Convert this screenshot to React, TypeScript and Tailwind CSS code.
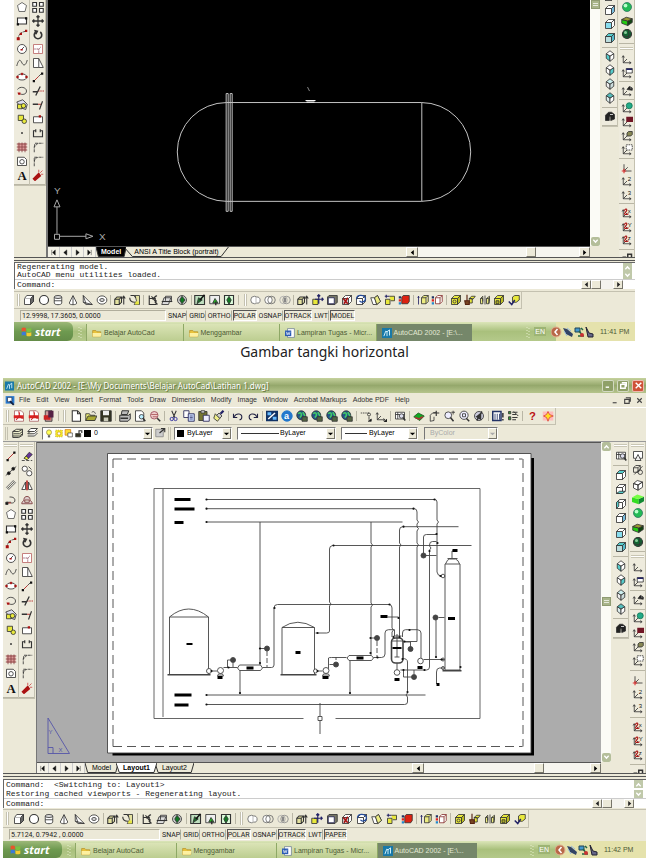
import React from 'react';

const cube = (face: string, top = '#fff', side = '#fff') => (
  <>
    <path d="M2 6h8v8H2z" fill={face} />
    <path d="M2 6l4-4h8l-4 4z" fill={top} />
    <path d="M10 6l4-4v8l-4 4z" fill={side} />
  </>
);

const iso = (left: string, right: string, top: string) => (
  <>
    <path d="M3 5l5 3v7l-5-4z" fill={left} />
    <path d="M13 5l-5 3v7l5-4z" fill={right} />
    <path d="M8 1l5 4-5 3-5-3z" fill={top} />
  </>
);

const ucs = (extra?: React.ReactNode) => (
  <>
    <path d="M3 4v9h10M3 13l5-5M1.5 6L3 3.5 4.5 6M11 11.5l2.5 1.5-2.5 1.5" />
    {extra}
  </>
);

const mark = (text: string) => (
  <text x="9" y="8" fontSize="8" fill="#111" stroke="none">{text}</text>
);

const red = '#a11';
const yellow = '#e8e83c';

const icons: Record<string, React.ReactNode> = {
  line: <><path d="M3 13L13 3" stroke={red} /><path d="M2 12h3v3H2zM11 2h3v3h-3z" fill="#111" stroke="none" /></>,
  xline: <><path d="M1 14L15 2" /><circle cx="5" cy="11" r="2" fill="#111" /><circle cx="11" cy="5" r="2" fill="#111" /></>,
  mline: <path d="M2 11L11 2l3 3-9 9zM4 12l8-8" fill="#e4e2d6" stroke="#555" />,
  pline: <><path d="M2 11h6M8 12c7 1 7-8 0-8l-2 0" /><path d="M2 12h6" stroke={red} /><path d="M1 11h3v3H1z" fill="#111" /></>,
  polygon: <path d="M8 2l6 4-2 8H4L2 6z" fill="#fff" stroke="#555" />,
  rect: <><path d="M2 4h12v8H2z" fill="#fff" strokeWidth="1.5" /><path d="M1 11h3v3H1zM12 3h3v3h-3z" fill="#111" stroke="none" /></>,
  arc: <><path d="M3 13C3 7 7 4 13 3" strokeDasharray="3 1" /><path d="M1 11h4v4H1zM5 5h3v3H5zM12 1h3v3h-3z" fill={red} stroke="none" /></>,
  circle: <><circle cx="8" cy="8" r="6" fill="#fff" /><path d="M7 9l4-4" /><path d="M6 8h3v2H6z" fill={red} stroke="none" /></>,
  spline: <path d="M1 12C4 1 6 4 8 8s5 4 7-4" />,
  ellipse: <><ellipse cx="8" cy="8" rx="6" ry="4" fill="#fff" /><path d="M1 7h2v2H1zM13 7h2v2h-2zM7 3h2v2H7z" fill={red} stroke={red} /></>,
  ellipseArc: <><path d="M2 6c3-5 12-3 12 2s-6 5-8 4" /><path d="M2 10h4v3H3z" fill={red} stroke="none" /></>,
  insert: <><path d="M1 4l8-3 6 6-2 7-6-2z" fill="#dde" /><path d="M2 7h6v6H2z" fill={yellow} /><circle cx="10" cy="9" r="3" fill={yellow} /></>,
  block: <><path d="M3 3h7v7H3z" fill={yellow} /><circle cx="11" cy="11" r="3" fill={yellow} /></>,
  point: <circle cx="8" cy="8" r="0.8" fill="#111" />,
  hatch: <><path d="M2 3h12v10H2z" fill="#d99" stroke="none" /><path d="M1 4h14M1 8h14M1 12h14M4 2v13M8 2v13M12 2v13" stroke="#844" /></>,
  region: <><path d="M2 3h9l3 3v8H2z" fill="#fff" /><circle cx="8" cy="9" r="3" /></>,
  mtext: <text x="2" y="14" fontSize="17" fontWeight="700" fill="#111" stroke="none" fontFamily="Liberation Serif, serif">A</text>,
  erase: <><path d="M1 14h14" strokeDasharray="4 2" /><path d="M5 10l6-7 4 3-6 6z" fill="#639" /><path d="M4 11l3-3 3 3-2 2z" fill={yellow} /></>,
  copy: <><circle cx="5" cy="5" r="3.5" fill="#fff" /><circle cx="11" cy="11" r="3.5" fill="#fff" /><path d="M10 2l4 4" /></>,
  mirror: <><path d="M1 14l5-10v10zM15 14L10 4v10z" fill="#fff" /><path d="M8 2v13" stroke={red} strokeWidth="2" /></>,
  offset: <path d="M1 13c0-4 3-3 3-6 0-5 8-5 8 0 0 3 3 2 3 6zM5 11h6V8H5z" stroke="#733" fill="#dcc" />,
  array: <path d="M1 2h5v5H1zM10 2h5v5h-5zM1 10h5v5H1zM10 10h5v5h-5z" fill="#fff" strokeWidth="1.5" />,
  move: <path d="M8 1v14M1 8h14M6 3l2-2 2 2M6 13l2 2 2-2M3 6L1 8l2 2M13 6l2 2-2 2" strokeWidth="1.7" />,
  rotate: <path d="M11 4a5 5 0 1 1-6 0M3 2l4 1-2 4" strokeWidth="2.2" />,
  scale: <><path d="M2 2h12v12H2z" stroke="#b66" fill="#fff" /><path d="M3 8h6v6M9 8l3-3" stroke="#845" strokeDasharray="2 1" /></>,
  stretch: <path d="M2 2h7v12H2zM9 2l6 12H9" fill="#fff" />,
  lengthen: <><path d="M3 13l6-6" stroke={red} /><path d="M9 7l4-4" /><path d="M1 12h3v3H1zM12 2h3v3h-3z" fill="#111" stroke="none" /></>,
  trim: <><path d="M8 8h8" stroke={red} strokeDasharray="2 1" /><path d="M1 9h7M5 14l6-12" strokeWidth="1.7" /></>,
  extend: <><path d="M1 7h7" strokeWidth="2" /><path d="M8 7h5" stroke={red} /><path d="M10 14l4-11" strokeWidth="1.5" /></>,
  breakPt: <><path d="M2 5h12v8H2z" fill="#fff" /><path d="M9 3h3v3H9z" fill={red} stroke="none" /></>,
  break: <path d="M5 5H2v8h12V5h-3M5 3v4M11 3v4" strokeWidth="1.5" />,
  chamfer: <path d="M3 15V8l5-5h7M3 8l1-5 4 0" strokeDasharray="4 1" />,
  fillet: <path d="M3 15V10c0-5 3-7 7-7h5M3 8V3h5" strokeDasharray="4 1" />,
  explode: <><path d="M2 13L9 6l2 3-7 6z" fill={red} stroke={red} strokeWidth="2" /><path d="M11 5l3-3M12 7h3M9 4V1" stroke="#c44" /></>,
  box: <><path d="M2 6l3-4h9v8l-4 4H2z" fill="#fff" /><path d="M10 6l4-4v8l-4 4z" fill="#666" /><path d="M2 6h8" stroke="#aaa" /></>,
  sphere: <circle cx="8" cy="8" r="6" fill="#fff" strokeWidth="1.5" />,
  cylinder: <><path d="M3 4v8c0 3 10 3 10 0V4" fill="#fff" /><ellipse cx="8" cy="4" rx="5" ry="2" fill="#ddd" /><path d="M3 9h10" /></>,
  cone: <><path d="M3 12L8 2l5 10c0 3-10 3-10 0z" fill="#fff" /><path d="M8 3v11" /></>,
  wedge: <path d="M3 2v9l4 3h8zM3 2l4 12M3 11l12 3" fill="#fff" />,
  torus: <><ellipse cx="8" cy="8" rx="6.5" ry="5.5" fill="#fff" /><ellipse cx="8" cy="8" rx="3" ry="2" fill="#ddd" /></>,
  extrude: <><path d="M1 7h6v7H1zM1 7l3-3h6L7 7M7 14l3-3V4" fill="#e4e2a0" strokeWidth="1.4" /><path d="M13 14V3M11 6l2-3 2 3" strokeWidth="1.4" /></>,
  revolve: <><path d="M8 2h6v12H7l3-5z" fill="#e4e2a0" /><path d="M9 10h4v4H8z" fill={yellow} stroke="none" /><path d="M1 5c0 5 3 6 7 6M2 2h5l2 3" strokeWidth="1.5" /></>,
  slice: <><path d="M3 2v12h9V8M3 6h8v6M6 3l8 11" strokeWidth="1.5" /><path d="M7 7l6-5" strokeWidth="2" /></>,
  section: <><path d="M4 5h9l-3 9H1zM6 9V3h8v7" fill="#ddd" /><path d="M1 10h14" strokeWidth="1.5" /></>,
  interfere: <><circle cx="8" cy="8" r="6" fill="#ccc" /><path d="M8 3l4 5-4 5-3-5z" fill="#172" /></>,
  setupDraw: <><path d="M1 2h13v12H1z" fill="#bfe0bf" strokeWidth="1.5" /><path d="M4 13l2-8 5 3z" fill="#1a6b2a" /><path d="M8 8l6-7" stroke="#111" strokeWidth="2" /></>,
  setupView: <><path d="M1 2h13v11H1z" fill="#eee" /><path d="M8 6l4 6H5z" fill="#2b2" /><path d="M9 10v5" strokeWidth="2" /></>,
  setupProf: <><path d="M2 2h12v12H2z" fill="#dfd" strokeWidth="1.5" /><path d="M8 3l3 5-3 6-3-6z" fill="#172" /></>,
  union: <><path d="M6 3a5 5 0 1 0 0 10c2 0 3-1 3-1 6 2 6-9 0-8z" fill="#fff" stroke="#666" /><path d="M8 4v8" stroke="#aaa" /></>,
  subtract: <><circle cx="6" cy="8" r="5" fill="#fff" stroke="#666" /><circle cx="10" cy="8" r="5" fill="none" stroke="#666" /></>,
  intersect: <><circle cx="6" cy="8" r="5" stroke="#aaa" /><circle cx="10" cy="8" r="5" stroke="#888" /><path d="M8 5v6" strokeWidth="3" stroke="#888" /></>,
  moveFace: <><path d="M1 7h7v7H1z" fill={yellow} /><path d="M9 1v12M4 7h11M7 3l2-2 2 2M13 5l2 2-2 2" stroke="#226" strokeWidth="1.6" /></>,
  offsetFace: <><path d="M4 2h11v9l-3 3H2V4z" fill="#776" /><path d="M3 5h8v8H3z" fill="#fff" stroke="#225" /></>,
  deleteFace: <>{cube('#ccc')}<path d="M3 6l6 7M9 5l-5 8" stroke={red} strokeWidth="2" /></>,
  rotateFace: <>{cube('#fff')}<path d="M2 7c0-8 12-6 12 0-1 4-6 5-8 2" stroke="#224a9a" strokeWidth="1.7" /></>,
  taperFace: <><path d="M1 5h5l3 9H4zM6 5l4-3 4 8-5 4" fill="#fff" /><path d="M6 5l4-3 4 8-5 4z" fill="#ecec80" /></>,
  copyFace: <><path d="M2 7h6v7H2zM7 3h7v6H9" fill={yellow} /><path d="M1 3h6M3 1v4" stroke="#226" strokeWidth="1.5" /></>,
  colorFace: <><path d="M5 4l2-2h8v8l-2 3H5z" fill="#d21" /><path d="M1 3h3v3H1z" fill="#236" stroke="none" /><path d="M1 7h3v3H1z" fill="#d22" stroke="none" /><path d="M1 11h3v3H1z" fill="#28c" stroke="none" /></>,
  copyEdge: <><path d="M6 5h6v8H6zM6 5l3-3h6l-3 3M15 2v8l-3 3" fill="#ecec80" /><path d="M2 3v11M1 5l1-2 1 2" stroke="#226" /></>,
  colorEdge: <><path d="M6 5h6v8H6zM6 5l3-3h6l-3 3M15 2v8l-3 3" fill="#fff" stroke="#833" /><path d="M1 3h3v3H1z" fill="#236" stroke="none" /><path d="M1 7h3v3H1z" fill="#d22" stroke="none" /><path d="M1 11h3v3H1z" fill="#28c" stroke="none" /></>,
  imprint: <>{cube(yellow, yellow, '#bb2')}<circle cx="6" cy="10" r="2" /></>,
  clean: <><path d="M7 6h4v6H7zM7 6l3-3h5l-3 4z" fill={yellow} /><path d="M4 1v8M1 9h6v5H2z" fill="#742" stroke="#521" strokeWidth="1.5" /></>,
  separate: <path d="M2 6h3v7H2zM2 6l3-3v7M10 6h3v7h-3zM10 6l4-3v7l-1 3M8 2v12" fill="#ecec80" />,
  shell: <>{cube(yellow, yellow, '#bb2')}<path d="M4 9h4v4H4z" fill="#aa2" /></>,
  check: <><path d="M6 4l3-2h6v6l-4 3H6z" fill={yellow} /><path d="M1 10l4 4 4-6" stroke="#226" strokeWidth="2" /></>,
  vTop: cube('#fff', '#5cc'),
  vBottom: <>{cube('#fff')}<path d="M2 14l4-3h8l-4 3z" fill="#5cc" /></>,
  vLeft: <>{cube('#fff')}<path d="M2 6l3-3v8l-3 3z" fill="#5cc" /></>,
  vRight: cube('#fff', '#fff', '#7bd'),
  vFront: cube('#8de'),
  vBack: cube('#bdd', '#5cc', '#5bc'),
  isoSW: iso('#5cc', '#fff', '#fff'),
  isoSE: iso('#fff', '#5cc', '#fff'),
  isoNE: iso('#eee', '#cdd', '#cee'),
  isoNW: iso('#dee', '#fff', '#5bb'),
  camera: <><path d="M2 7l4-4h4l4 3v6l-5 2V9H7v5H2z" fill="#222" /><path d="M8 6h4" stroke="#eee" /></>,
  named: <><path d="M2 3h12v9H2zM2 6h12M5 3v9" fill="#fff" /><circle cx="10" cy="8" r="3" fill="#dde" /><path d="M12 10l3 4" strokeWidth="2" /></>,
  wire2d: <><path d="M2 2h12v9H2z" fill="#fff" /><path d="M4 14l4-8 4 8z" fill="#eee" /></>,
  wire3d: <><path d="M2 5h6v6H2zM2 5l3-3h6L8 5M11 2v6l-3 3" /><circle cx="11" cy="11" r="3" /><path d="M3 14L14 3" /></>,
  hidden: <path d="M2 6l6 2v7l-6-3zM8 8l6-4v7l-6 4zM2 6l5-4 7 2-6 4z" fill="#fff" />,
  flat: <><path d="M0 6l9 2v7l-9-3z" fill="#3d2" stroke="none" /><path d="M9 8l7-3v6l-7 4z" fill="#183" stroke="none" /><path d="M0 6l7-4 9 3-7 3z" fill="#7f4" stroke="none" /></>,
  gouraud: <><circle cx="8" cy="8" r="6" fill="#2b5" stroke="#376" /><circle cx="6" cy="6" r="2.5" fill="#bfc" stroke="none" /></>,
  flatEdge: <><path d="M1 6l8 2v6l-8-3z" fill="#2c1" /><path d="M9 8l6-3v5l-6 4z" fill="#141" /><path d="M1 6l6-3 8 2-6 3z" fill="#993" /></>,
  gouraudEdge: <><circle cx="8" cy="8" r="6" fill="#163" strokeWidth="1.5" /><circle cx="6" cy="6" r="2" fill="#8c9" stroke="none" /><path d="M3 10c3 2 7 2 10-1M9 2c2 4 2 8 0 12" /></>,
  ucs: ucs(),
  ucsWin: ucs(<><path d="M7 2h8v6H7z" fill="#fff" /><path d="M7 3h8" stroke="#226" strokeWidth="2" /></>),
  ucsPrev: ucs(<><path d="M8 6l3-4 4 2v3z" fill="#222" /><circle cx="13" cy="4" r="1" fill="#fff" /></>),
  ucsWorld: ucs(<circle cx="11" cy="5" r="4" fill="#2a8" stroke="#175" />),
  ucsObj: ucs(<path d="M7 1h9v7H7z" fill="#701525" stroke="none" />),
  ucsFace: ucs(<path d="M8 4l2-2h5v4l-2 2H8z" fill="#885" />),
  ucsView: ucs(<path d="M7 1h8v7H7z" fill="#fff" strokeDasharray="2 1" />),
  ucsOrigin: <><path d="M4 3v9h10M4 12l5-5" /><path d="M1 12h6M4 9v6" stroke="#d33" strokeWidth="1.5" /></>,
  ucsZ: ucs(mark('2')),
  ucs3: ucs(mark('3')),
  ucsRotX: ucs(<>{mark('x')}<path d="M4 5c4-5 5-1 2 2s0 4 4 2" stroke={red} strokeWidth="1.5" /></>),
  ucsRotY: ucs(<>{mark('Y')}<path d="M4 5c4-5 5-1 2 2s0 4 4 2" stroke={red} strokeWidth="1.5" /></>),
  ucsRotZ: ucs(<>{mark('z')}<path d="M4 5c4-5 5-1 2 2s0 4 4 2" stroke={red} strokeWidth="1.5" /></>),
  apply: <path d="M3 15V7h4M9 3h5v8H9z" strokeWidth="2" />,
  pdf: <><path d="M2 1h9l3 3v11H2z" fill="#fff" stroke="#a66" /><path d="M1 7h13v4H1z" fill="#d22" stroke="none" /><path d="M4 13c5-3 5-9 4-10 0 5 2 8 6 8" stroke="#c22" strokeWidth="1.5" /></>,
  pdfMail: <><path d="M3 1h9v14H3z" fill="#c99" /><path d="M1 7h9v6H1z" fill="#c22" stroke="none" /><path d="M7 1h7v9H7z" fill="#524" stroke="none" /></>,
  new: <path d="M3 1h7l4 4v10H3zM10 1v4h4" fill="#fff" strokeWidth="1.4" />,
  open: <><path d="M1 5h5l1 2h6v7H1z" fill="#ee7" /><path d="M1 14l3-6h12l-3 6z" fill="#aa3" /><path d="M9 3c3-2 4 0 5 2" /></>,
  save: <><path d="M1 1h14v14H1z" fill="#332" /><path d="M4 1h8v6H4z" fill="#eee" stroke="none" /><path d="M5 10h6v5H5z" fill="#ccb" stroke="none" /></>,
  print: <><path d="M4 1h9l-2 5H3zM1 7h12l2-2v7l-3 3H1z" fill="#bbb" strokeWidth="1.3" /><path d="M2 11h10" strokeWidth="2" /></>,
  preview: <><path d="M2 1h8l3 3v11H2z" fill="#fff" /><circle cx="10" cy="9" r="3" fill="#bef" /><path d="M12 11l3 4" strokeWidth="2" /></>,
  find: <><circle cx="7" cy="7" r="5" fill="#ecc" stroke="#945" /><path d="M3 6h9M5 9h6" stroke="#a55" /><path d="M11 11l4 4" strokeWidth="2" /></>,
  cut: <><path d="M5 1l4 9M11 1L7 10" strokeWidth="1.4" /><circle cx="5" cy="12" r="2.2" stroke="#229" /><circle cx="10" cy="12" r="2.2" stroke="#229" /></>,
  copyClip: <><path d="M1 1h7v9H1z" fill="#fff" stroke="#225" /><path d="M7 5h8v10H7z" fill="#cdf" stroke="#225" /><path d="M9 8h4M9 10h4M9 12h4" stroke="#447" /></>,
  paste: <><path d="M1 2h11v12H1z" fill="#773" /><path d="M4 1h5v3H4z" fill="#ddd" /><path d="M7 7h8v8H7z" fill="#eef" stroke="#225" /></>,
  brush: <><path d="M10 5l4-4" stroke="#226" strokeWidth="3" /><path d="M3 5l6 6-3 4-5-4z" fill="#ee8" /><path d="M8 4l4 4-3 3-4-4z" fill="#ccc" /></>,
  undo: <path d="M2 5v5h5M3 9c3-6 11-4 10 1 0 2-2 3-3 3" stroke="#224" strokeWidth="1.5" />,
  redo: <path d="M14 5v5H9M13 9C10 3 2 5 3 10c0 2 2 3 3 3" stroke="#224" strokeWidth="1.5" />,
  today: <><path d="M0 1h16v14H0z" fill="#136" stroke="none" /><path d="M2 3h5v4H2zM9 9h5v4H9z" fill="#6bf" stroke="none" /><path d="M3 12l9-8" stroke="#fff" strokeWidth="2" /></>,
  aPoint: <><circle cx="8" cy="8" r="7" fill="#27c" stroke="#27c" /><text x="4" y="12" fontSize="12" fontWeight="700" fill="#fff" stroke="none">a</text></>,
  globe: <><circle cx="7" cy="7" r="6" fill="#258" /><path d="M3 5c4-4 6 2 2 5M9 3l3 5" stroke="#4c6" strokeWidth="2" /><path d="M8 9h7v6H8z" fill="#564" /></>,
  track: <><path d="M1 4h11" strokeDasharray="2 1" /><circle cx="12" cy="6" r="2" /><path d="M12 9v4M11 15h4v-3z" fill="#111" /></>,
  dist: ucs(<path d="M12 16h4v-4z" fill="#111" />),
  aerial: <><path d="M1 9l6-5 8 4-6 6z" fill="#1a2" stroke="#252" /><path d="M3 10l5 2 5-3" stroke="#a33" strokeWidth="2" /></>,
  orbit: <><path d="M3 15V7l3-3 5-1M3 15l5-1V9" /><path d="M7 4h8M11 1v7" strokeWidth="1.5" /></>,
  zoomRt: <><circle cx="7" cy="7" r="4.5" fill="#eef" /><path d="M10 10l4 5" strokeWidth="2" /><path d="M11 3h5M13.5 1v5" /></>,
  zoomWin: <><circle cx="8" cy="7" r="5.5" fill="#eef" /><path d="M6 5h4v4H6z" /><path d="M11 11l4 4" strokeWidth="2" /></>,
  zoomPrev: <><circle cx="8" cy="8" r="6" fill="#ccd" /><path d="M5 9l5-4v7zM12 2l-7 12" strokeWidth="2" /></>,
  designCtr: <><path d="M1 2h11v12H1z" fill="#fff" stroke="#236" strokeWidth="2" /><path d="M4 5v8M7 5v8M10 5v8" stroke="#236" /><path d="M14.5 4v6M14.5 12v2" strokeWidth="2" /></>,
  props: <><path d="M2 2h3v3H2zM2 9h3v4H2z" fill="#393" /><path d="M7 3h7M7 6h5M7 10h7M7 13h5M9 2l6 6" strokeWidth="1.3" /></>,
  help: <text x="4" y="13" fontSize="15" fontWeight="700" fill="#b11" stroke="none">?</text>,
  active: <><path d="M1 2h14v12H1z" fill="#fbb" stroke="none" /><path d="M8 2l2 4 5 2-5 2-2 5-2-5-4-2 4-2z" fill="#fd2" stroke="#d44" /></>,
  layers: <path d="M1 6h8l5-3H6zM1 6v8h8l5-3V3M2 9h8l4-3M1 12h9l4-3" fill="#eec" strokeWidth="1.2" />,
  layers2: <path d="M1 6l4-4h9l-4 4zM1 9l3-3M1 9h9l4-4M1 12h9l4-4" fill="#fff" strokeWidth="1.2" />,
  layerObj: <><path d="M1 3h10v10H1z" fill="#ccc" stroke="#888" /><path d="M6 8l6-5M8 2h5v5" strokeWidth="1.5" /></>,
  bulb: <><circle cx="8" cy="6" r="4.5" fill="#ff5" stroke="#874" /><path d="M6 11h4v4H6z" fill="#666" stroke="none" /></>,
  sun: <><path d="M2 2h12v12H2z" fill="#f4ec2b" stroke="#b80" strokeDasharray="2 2" /><circle cx="8" cy="8" r="3" fill="#fff" stroke="#c80" /></>,
  sunVp: <><path d="M1 1h10v10H1z" fill="#fd3" stroke="#c60" /><path d="M6 7h8v7H6z" fill="#fff" /></>,
  lock: <><path d="M2 8h9v6H2z" fill="#332" /><path d="M8 8V3h5v4" strokeWidth="2" /></>,
};

const Icon = ({ name, className = 'w-[12px] h-[12px]' }: { name: string; className?: string }) => (
  <svg viewBox="0 0 16 16" className={`${className} flex-shrink-0`} fill="none" stroke="#333" strokeWidth="1.1" fontFamily="Liberation Sans, sans-serif">
    {icons[name]}
  </svg>
);

/* '|' is a separator, '#' a toolbar grip, '-' the closing edge */
const ToolColumn = ({ items, className = '' }: { items: string[]; className?: string }) => (
  <div className={`flex flex-col w-[16px] flex-shrink-0 bg-[#eeebdd] border-r border-b border-[#c4c1b0] ${className}`}>
    {items.map((item, i) => {
      if (item === '|') return <div key={i} className="h-[4px] flex-shrink-0 flex items-center"><div className="w-full h-px bg-[#b9b6a5]" /></div>;
      if (item === '#') return <div key={i} className="h-[3px] mx-px mt-[2px] mb-[2px] flex-shrink-0 border-t border-b border-[#c9c6b4] bg-white" />;
      if (item === '-') return <div key={i} className="h-[3px] flex-shrink-0 border-b border-[#b9b6a5]" />;
      return (
        <button key={i} aria-label={item} className="flex-1 min-h-0 flex items-center justify-center">
          <Icon name={item} />
        </button>
      );
    })}
  </div>
);

const ToolRow = ({ items, className = '' }: { items: string[]; className?: string }) => (
  <div className={`flex items-stretch border-r border-b border-[#c4c1b0] ${className}`}>
    {items.map((item, i) => {
      if (item === '|') return <div key={i} className="w-[4px] flex-shrink-0 flex justify-center py-[3px]"><div className="w-px bg-[#b9b6a5]" /></div>;
      if (item === '#') return <div key={i} className="w-[3px] mr-[2px] ml-[3px] my-[2px] flex-shrink-0 border-l border-r border-[#c4c1b0] bg-white" />;
      return (
        <button key={i} aria-label={item} className="flex-1 min-w-0 flex items-center justify-center">
          <Icon name={item} />
        </button>
      );
    })}
  </div>
);

const drawTools = ['polygon', 'rect', 'arc', 'circle', 'spline', 'ellipse', 'ellipseArc', 'insert', 'block', 'point', 'hatch', 'region', 'mtext'];
const editTools = ['array', 'move', 'rotate', 'scale', 'stretch', 'lengthen', 'trim', 'extend', 'breakPt', 'break', 'chamfer', 'fillet', 'explode'];
const ucsTools = ['ucs', 'ucsWin', '|', 'ucsPrev', '|', 'ucsWorld', 'ucsObj', 'ucsFace', 'ucsView', '|', 'ucsOrigin', 'ucsZ', 'ucs3', '|', 'ucsRotX', 'ucsRotY', 'ucsRotZ', '|'];
const isoTools = ['|', 'isoSW', 'isoSE', 'isoNE', 'isoNW', '|', 'camera'];
const solidTools = [
  '#', 'box', 'sphere', 'cylinder', 'cone', 'wedge', 'torus', '|', 'extrude', 'revolve', '|', 'slice', 'section', 'interfere', '|',
  'setupDraw', 'setupView', 'setupProf', '|', '#', 'union', 'subtract', 'intersect', '|', 'extrude', 'moveFace', 'offsetFace',
  'deleteFace', 'rotateFace', 'taperFace', 'copyFace', 'colorFace', '|', 'copyEdge', 'colorEdge', '|', 'imprint', 'clean', 'separate', 'shell', 'check',
];
const standardTools = [
  '#', 'pdf', 'pdf', 'pdfMail', '|', '#', 'new', 'open', 'save', '|', 'print', 'preview', 'find', '|', 'cut', 'copyClip', 'paste', 'brush', '|',
  'undo', 'redo', '|', 'today', 'aPoint', 'globe', 'globe', 'globe', 'globe', '|', 'track', 'dist', '|', 'named', '|',
  'aerial', 'orbit', 'zoomRt', 'zoomWin', 'zoomPrev', '|', 'designCtr', 'props', '|', 'help', 'active',
];

const Arrow = ({ d }: { d: string }) => (
  <svg viewBox="0 0 8 8" className="w-[7px] h-[7px]"><path d={d} fill="currentColor" /></svg>
);
const LEFT = 'M5.5 1v6L2 4z';
const RIGHT = 'M2.5 1v6L6 4z';
const UP = 'M1 5.5L4 2l3 3.5-1 1-2-2-2 2z';
const DOWN = 'M1 2.5L4 6l3-3.5-1-1-2 2-2-2z';

const VScroll = ({ thumb }: { thumb: string }) => (
  <div className="w-[10px] flex-shrink-0 bg-[#fbfbf6] flex flex-col items-center text-white">
    {thumb !== 'pt-0' && <button aria-label="Scroll up" className="w-[9px] h-[9px] bg-[#b4be9a] rounded-xs flex items-center justify-center"><Arrow d={UP} /></button>}
    <div className={`flex-1 ${thumb}`}>
      <div className="w-[9px] h-[9px] bg-[#a8b48a] border border-[#8f9b72] flex flex-col justify-center gap-px px-px">
        <div className="h-px bg-white/70" /><div className="h-px bg-white/70" />
      </div>
    </div>
    <button aria-label="Scroll down" className="w-[9px] h-[9px] bg-[#b4be9a] rounded-xs flex items-center justify-center"><Arrow d={DOWN} /></button>
  </div>
);

const raised = 'bg-[#ece9d8] border border-t-white border-l-white border-r-[#77756a] border-b-[#77756a] flex items-center justify-center';

const HScroll = ({ className }: { className: string }) => (
  <div className={`bg-[#f6f5ef] flex justify-between ${className}`}>
    <button aria-label="Scroll left" className={`w-[12px] ${raised}`}><Arrow d={LEFT} /></button>
    <div className={`w-[10px] ml-[64px] ${raised}`} />
    <button aria-label="Scroll right" className={`w-[11px] ${raised}`}><Arrow d={RIGHT} /></button>
  </div>
);

const SheetTabs = ({ tabs, active, dark, scroll }: { tabs: string[]; active: number; dark?: boolean; scroll: string }) => (
  <div className="h-[11px] flex bg-[#ece9d8] border-t border-[#555]">
    {['M2 1v6M6 1v6L3 4z', LEFT, RIGHT, 'M6 1v6M2 1v6l3-3z'].map((d, i) => (
      <button key={i} aria-label={['First', 'Previous', 'Next', 'Last'][i]} className="w-[12px] bg-[#f4f2e8] border-r border-[#ccc] flex items-center justify-center">
        <svg viewBox="0 0 8 8" className="w-[7px] h-[7px]"><path d={d} fill="#111" stroke="#111" strokeWidth="0.5" /></svg>
      </button>
    ))}
    {tabs.map((tab, i) => {
      const isActive = i === active;
      const fill = isActive ? (dark ? 'fill-black' : 'fill-white') : 'fill-[#ece9d8]';
      const pad = dark ? (isActive ? 'px-[5px]' : 'px-[10px]') : 'px-[7px]';
      return (
        <button key={tab} className={`relative h-full leading-[10px] whitespace-nowrap ${pad} -mr-[2px] ${isActive ? 'font-bold z-10' : ''} ${isActive && dark ? 'text-white' : 'text-black'}`}>
          <svg viewBox="0 0 100 10" preserveAspectRatio="none" className="absolute inset-0 w-full h-full">
            <path d="M0 0L8 9.5H93L100 0" className={fill} stroke="#333" strokeWidth="1" vectorEffect="non-scaling-stroke" />
          </svg>
          <span className="relative">{tab}</span>
        </button>
      );
    })}
    <div className="flex-1" />
    <HScroll className={scroll} />
  </div>
);

const CommandLine = ({ lines, roomy }: { lines: string[]; roomy?: boolean }) => (
  <div className={`${roomy ? 'h-[36px] pb-[3px] leading-[9px]' : 'h-[34px] pb-[4px] leading-[8px]'} flex flex-col font-['Liberation_Mono',monospace] text-[8px] text-[#222]`}>
    <div className={`h-[4px] flex-shrink-0 border-t border-b border-[#555] bg-[#ece9d8] ${roomy ? 'mb-[2px]' : 'mb-px'}`} />
    <div className="flex-1 flex flex-col border-l border-[#666] border-t bg-white">
      <div className="flex justify-between border-b border-[#ccc]">
        <div className="pl-[2px] whitespace-pre">
          {lines.map((line) => <div key={line}>{line}</div>)}
        </div>
        <div className="w-[9px] mr-[3px] flex flex-col justify-between text-white">
          <button aria-label="Scroll up" className="h-[8px] bg-[#c0c9aa] flex items-center justify-center"><Arrow d={UP} /></button>
          <button aria-label="Scroll down" className="h-[8px] bg-[#c0c9aa] flex items-center justify-center"><Arrow d={DOWN} /></button>
        </div>
      </div>
      <div className="flex-1 flex items-center">
        <label className="flex-1 flex items-center pl-[2px]">
          Command:
          <input type="text" className="flex-1 ml-1 h-[8px] outline-none bg-transparent" />
        </label>
        <div className="w-[42px] h-full mr-[12px] bg-[#f4f3ee] flex">
          <button aria-label="Scroll left" className={`w-[10px] ${raised}`}><Arrow d={LEFT} /></button>
          <div className={`w-[10px] ${raised}`} />
          <div className="flex-1" />
          <button aria-label="Scroll right" className={`w-[10px] ${raised}`}><Arrow d={RIGHT} /></button>
        </div>
      </div>
    </div>
  </div>
);

const StatusBar = ({ coords, space, coordClass }: { coords: string; space: string; coordClass: string }) => (
  <div className="h-[13px] flex items-center gap-px pl-[6px] bg-[#ece9d8] leading-[10px] text-[#222] font-['Roboto',sans-serif]">
    <div className={`h-[11px] pl-px border border-[#b0ad9c] border-r-white border-b-white ${coordClass}`}>{coords}</div>
    {['SNAP', 'GRID', 'ORTHO', 'POLAR', 'OSNAP', 'OTRACK', 'LWT', space].map((mode) => {
      const pressed = mode === 'POLAR' || mode === 'OTRACK' || mode === space;
      return (
        <button key={mode} className={`h-[11px] border ${pressed ? 'border-[#555] border-r-white border-b-white' : 'border-transparent border-r-[#b0ad9c]'}`}>
          {mode}
        </button>
      );
    })}
  </div>
);

const Folder = () => (
  <svg viewBox="0 0 16 16" className="w-[10px] h-[10px] flex-shrink-0"><path d="M1 4h5l2 2h6v8H1z" fill="#e8c23c" stroke="#b08820" /><path d="M1 8h14l-1 6H1z" fill="#fdf0a0" /></svg>
);
const WordIcon = () => (
  <svg viewBox="0 0 16 16" className="w-[10px] h-[10px] flex-shrink-0"><path d="M4 1h11v14H4z" fill="#fff" stroke="#568" /><path d="M0 4h10v9H0z" fill="#2a5bb5" /><path d="M2 6l1.5 5L5 7l1.5 4L8 6" fill="none" stroke="#fff" /></svg>
);
const CadIcon = ({ className = 'w-[10px] h-[10px]' }: { className?: string }) => (
  <svg viewBox="0 0 16 16" className={`${className} flex-shrink-0`}><path d="M0 0h16v16H0z" fill="#1879a8" /><path d="M3 13l3-8 2 1v7M8 6l4-3v9" fill="none" stroke="#d8f4ff" strokeWidth="1.5" /></svg>
);

const Grip = () => (
  <svg viewBox="0 0 4 12" className="w-[4px] h-[12px] flex-shrink-0" stroke="#e6edcc" strokeDasharray="1 2"><path d="M1 1v10M3 2v10" /></svg>
);

const TaskBar = ({ time, tasks, tray, height }: { time: string; tasks: string; tray: string; height: string }) => (
  <div className={`${height} flex items-stretch bg-gradient-to-b from-[#dbe5b8] via-[#a9c07c] to-[#b4c98a] text-[#4c5a34] overflow-hidden`}>
    <button className="w-[59px] pl-[7px] flex items-center gap-[3px] rounded-r-md bg-gradient-to-b from-[#9cb878] via-[#6e9a50] to-[#648c48] text-white font-['Open_Sans',sans-serif] text-[11px] font-bold italic">
      <svg viewBox="0 0 16 16" className="w-[11px] h-[11px]">
        <path d="M1 3c2-1 4-1 6 0v5c-2-1-4-1-6 0z" fill="#e8542c" /><path d="M8 3c2 1 4 1 7 0v5c-3 1-5 1-7 0z" fill="#7cc242" />
        <path d="M1 9c2-1 4-1 6 0v5c-2-1-4-1-6 0z" fill="#3c7ad8" /><path d="M8 9c2 1 4 1 7 0v5c-3 1-5 1-7 0z" fill="#f5cc30" />
      </svg>
      start
    </button>
    <div className="w-[13px] flex items-center justify-center"><Grip /></div>
    <div className={`${tasks} flex items-stretch`}>
      {['Belajar AutoCad', 'Menggambar', 'Lampiran Tugas - Micr...', 'AutoCAD 2002 - [E:\\...'].map((task, i) => (
        <button
          key={task}
          className={`flex-1 min-w-0 mt-[2px] pl-[5px] flex items-center gap-[2px] whitespace-nowrap border-l border-[#8ea866] ${i === 3 ? 'bg-[#75876a] text-[#e4ead6]' : 'bg-gradient-to-b from-[#dbe4b6] to-[#bccd90]'}`}
        >
          {i < 2 ? <Folder /> : i === 2 ? <WordIcon /> : <CadIcon />}
          {task}
        </button>
      ))}
    </div>
    <div className="flex-1" />
    <div className="flex items-center gap-[4px] pr-[10px]"><Grip /><span className="px-px bg-[#9db474] text-white leading-[9px]">EN</span></div>
    <div className={`${tray} flex items-center bg-[#e5e2ac]`}>
      <svg viewBox="0 0 44 14" className="w-[44px] h-[14px] -ml-[5px] flex-shrink-0" fill="none">
        <circle cx="5" cy="7" r="5" fill="#b86848" stroke="#e0b090" /><path d="M6.5 4L4 7l2.5 3" stroke="#fff" strokeWidth="1.5" />
        <path d="M12 3l4 1 6 5-1 3-6-3z" fill="#346" /><path d="M16 3l4 3M13 6l3 5" stroke="#9bd" />
        <path d="M24 3h5v4h-5z" fill="#49c" stroke="#245" /><path d="M28 6l4 5M27 11h6M30 3l2 2" stroke="#264" strokeWidth="1.5" /><circle cx="31" cy="10" r="2" fill="#c33" />
        <path d="M35 2l3 6 4 1v3h-5z" fill="#668" stroke="#223" />
      </svg>
      <span className="ml-[5px] whitespace-nowrap">{time}</span>
    </div>
  </div>
);

const TankDrawing = () => (
  <svg viewBox="48 0 543 246" className="block w-full h-[246px] bg-black" fill="none" stroke="#c4c4c4" fontFamily="Liberation Sans, sans-serif">
    <path d="M227 102.500H422A49.250 49.250 0 0 1 422 201.500H227A49.250 49.250 0 0 1 227 102.500M422.500 102.500V201.500" />
    <path d="M226.500 93.500h2v118h-2zM230.500 93.500h2v118h-2z" />
    <path d="M306 100.500h10M307 102h8" stroke="#fff" />
    <path d="M308 87l2 4" stroke="#888" />
    <path d="M54.500 234.500h5v5h-5zM57 234V207M54 207l3-7 3 7zM60 236.500H86M86 234l7 2.500-7 2.500z" stroke="#aaa" />
    <text x="54" y="194" fontSize="10" fill="#aaa" stroke="none">Y</text>
    <text x="99" y="240" fontSize="10" fill="#aaa" stroke="none">X</text>
  </svg>
);

const labels = [
  [174, 498, 16, 3], [174, 507.5, 20, 3], [174, 521, 9, 3], [174, 693.5, 17, 3], [174, 703.5, 14, 3],
  [186, 643, 6, 2], [295, 651, 5, 3], [246, 666.5, 7, 3], [356, 656.5, 7, 3], [217, 676, 5, 3], [322, 676, 6, 3],
  [380, 615, 7, 3], [392, 647, 9, 2], [394, 678, 5, 3], [417, 666, 5, 3], [452, 549, 5, 3], [447.5, 617, 7, 3], [436, 683, 3, 3],
];
const gauges = [[232.5, 660], [266.5, 648.5], [335.5, 664.5], [376.5, 638], [410, 649], [413.5, 677], [423, 555.5], [435, 617.5]];
const dots = [
  [206, 499.5], [206, 508.7], [206, 522], [206, 695], [206, 704.5], [434, 499.5], [413, 508.7], [403, 526.7], [333, 545.5],
  [389, 604.5], [259.5, 663], [370, 653], [239.5, 693], [349.5, 693], [274, 608], [317, 633], [440, 576], [398, 618], [409, 630],
  [424, 670], [407, 692], [436, 534], [429, 551], [435.5, 657], [441, 659.5], [460, 667], [402, 659], [404, 641.5], [228, 667.5], [377, 657.5],
  [393, 637], [399, 637], [211, 671], [317, 671], [437, 543], [403, 670], [259.5, 648.5], [370, 638],
];

const PlantDrawing = () => (
  <svg viewBox="37 443 563 319" className="block w-full h-[319px] bg-[#acacac]" fill="none" stroke="#444" strokeWidth="0.9" fontFamily="Liberation Sans, sans-serif">
    <path d="M112 458H533.500V755.500H112z" fill="#000" stroke="none" />
    <path d="M107 453.500H530.500V753H107z" fill="#fff" stroke="#444" />
    <path d="M112.500 459H522M112.500 746.500H522" stroke="#444" strokeDasharray="9 5" />
    <path d="M112.500 459V746.500M522.500 459V746.500" stroke="#444" strokeDasharray="9 5" />
    <path d="M303 718.500H153.500V488.500H479.500V718.500H335M162.500 488.500V717" stroke="#555" />
    <path d="M319.500 703V716M319.500 720.500V734" /><path d="M317.500 716.500h4v4h-4z" />

    <path d="M206 499.500H434Q436.500 499.500 436.500 502V520q3 2 0 4V572Q437 576 441 576" />
    <path d="M206 508.700H414Q416.500 509 416.500 512V520q3 2 0 4V527q3 1 0 4V543q3 2 0 4V641.500H404" />
    <path d="M206 522H402M259.500 522V665M370.500 522V543q3 2 0 4V603q3 2 0 4V655" />
    <path d="M458 526.700H402Q399 527 399 530V543q3 2 0 4V636" />
    <path d="M471 545.500H332Q329 546 329 549V602q3 2 0 4V631Q329 633 326 633H315" />
    <path d="M262 667.500H271Q273.500 667.500 273.500 665V608Q273.500 604.500 277 604.500H389Q391.500 605 391.500 608V628q3 2 0 4V637" />
    <path d="M206 695H425M206 704.500H404Q407 704.500 407 702V697q-3-2 0-4V662Q407 658.500 402 658.500" />
    <path d="M239.500 670V694M349.500 661V694" />

    <path d="M169 617V674.500H208V617zM169 617Q188 601 208 617M281.500 627.500V674.500H314V627.500zM281.500 627.500Q297 617 314 627.500" />
    <path d="M167 674.700H210M280 674.700H316M442 670.700H461" strokeWidth="1.5" />
    <path d="M210 671H217M223 667.500H237M227 667V660H230M232.500 663V667M316 671H322M328 670V658Q328 657.500 331 657.500H346M329 664.500H333M335.500 660V657" />
    <circle cx="208.500" cy="671" r="2.500" fill="#fff" /><circle cx="220" cy="670.500" r="3" fill="#fff" />
    <circle cx="315" cy="671" r="2" fill="#fff" /><circle cx="325.500" cy="670.500" r="3" fill="#fff" />
    <path d="M218 674h4l1 2h-6zM323 674h5l1 2h-7z" />
    <path d="M237 668l2-3H260l2 3-2 2.500H239zM346.500 658l2-2.500H371l2 2.500-2 2.500H348.500z" fill="#fff" />
    <path d="M259.500 648.500H266M266.500 651V667M370.500 638H376M376.500 641V657" strokeDasharray="5 2" />
    <path d="M373 657.500H381Q384.500 657.500 384.500 654V633Q384.500 629.700 388 629.700H394V636" />

    <rect x="391" y="638" width="11.500" height="25" rx="4" fill="#fff" strokeWidth="1.6" />
    <path d="M396.500 634V657M394 657h5M393 636h8M391 641h11" />
    <path d="M402 637V633Q402 629.700 405 629.700H417Q420.500 630 420.500 633V658M403 642H410V647M387 617H398" />
    <path d="M396.500 663V670M400 670H426Q429 670 429 667V550q3-2 0-4V545Q429 541.500 432 541.500H436M403 670V677H411M413.500 674V670" />
    <circle cx="396.500" cy="672.500" r="2.800" fill="#fff" /><circle cx="420" cy="661" r="2.800" fill="#fff" />
    <path d="M423 659.500H444M423 553V537Q423 534.500 426 534.500H436M425 555.500H436M438 617.500H444M435.500 620V658" />
    <path d="M444.500 564H459.500V670H444.500z" fill="#fff" />
    <path d="M445 564Q447 559 449 559H455Q458 560 459 564M447 558.500H457M451.500 558V551H456M444 668H439Q436 668 436 672V684" />
    <circle cx="442.500" cy="576" r="1.800" /><circle cx="442.500" cy="659.500" r="1.500" /><circle cx="442.500" cy="668" r="1.500" />

    {labels.map(([x, y, w, h], i) => <rect key={i} x={x} y={y} width={w} height={h} fill="#000" stroke="none" />)}
    {gauges.map(([x, y], i) => <circle key={i} cx={x} cy={y} r="2.500" fill="#444" />)}
    {dots.map(([x, y], i) => <circle key={i} cx={x} cy={y} r="1.100" fill="#111" stroke="none" />)}

    <path d="M47.500 718V753.500H69zM47.500 747.500h5v6" stroke="#5555a8" />
    <text x="48" y="734" fontSize="6" fill="#5555a8" stroke="none">Y</text>
    <text x="58" y="752" fontSize="6" fill="#5555a8" stroke="none">X</text>
  </svg>
);

const Combo = ({ label, value, className, pad, line, disabled }: { label: string; value: string; className: string; pad: string; line?: string; disabled?: boolean }) => (
  <div className={`relative h-[13px] border border-[#777] border-r-white border-b-white flex items-center ${disabled ? 'bg-[#ece9d8] text-[#aaa]' : 'bg-white text-black'} ${className}`}>
    <select aria-label={label} disabled={disabled} className={`appearance-none w-full h-full bg-transparent outline-none ${pad}`}>
      <option>{value}</option>
    </select>
    {line && <div className={`absolute left-[3px] top-[5px] h-px bg-[#333] ${line}`} />}
    <div className={`absolute right-0 top-0 w-[9px] h-[11px] pointer-events-none ${raised}`}><Arrow d="M1 3h6L4 6z" /></div>
  </div>
);

const TitleBar = () => (
  <header className="h-[15px] pl-[2px] pr-[2px] flex items-center bg-gradient-to-b from-[#c6d29e] via-[#95a86c] to-[#b5c48c] text-white">
    <CadIcon className="w-[9px] h-[10px]" />
    <h1 className="ml-[3px] flex-1 font-['Noto_Sans',sans-serif] text-[8px] whitespace-pre [text-shadow:1px_1px_0_#64743f]">AutoCAD 2002 - [E:\My Documents\Belajar AutoCad\Latihan 1.dwg]</h1>
    <div className="flex gap-[3px]">
      {['M3 11h6', 'M5 3h8v7M3 6h8v7H3z', 'M3 3l10 10M13 3L3 13'].map((d, i) => (
        <button key={i} aria-label={['Minimize', 'Restore', 'Close'][i]} className={`w-[12px] h-[12px] rounded-xs border border-white/60 flex items-center justify-center ${i === 2 ? 'bg-[#cf5238]' : 'bg-[#8fa068]'}`}>
          <svg viewBox="0 0 16 16" className="w-[9px] h-[9px]" fill="none" stroke="#fff" strokeWidth="2.5"><path d={d} /></svg>
        </button>
      ))}
    </div>
  </header>
);

const MenuBar = () => (
  <nav className="h-[14px] pl-[2px] pr-[2px] flex items-center gap-[6px] whitespace-nowrap text-[#333]">
    <svg viewBox="0 0 16 16" className="w-[10px] h-[11px] -mr-[2px]"><path d="M1 1h14v12H1z" fill="#2a7ad0" /><path d="M4 3h7v7H4z" fill="#fff" stroke="#124" /><path d="M8 9l6 6" stroke="#124" strokeWidth="3" /></svg>
    {['File', 'Edit', 'View', 'Insert', 'Format', 'Tools', 'Draw', 'Dimension', 'Modify', 'Image', 'Window', 'Acrobat Markups', 'Adobe PDF', 'Help'].map((item) => (
      <button key={item}>{item}</button>
    ))}
    <div className="flex-1" />
    {['M3 12h7', 'M5 3h8v7M3 6h8v7H3z', 'M4 4l8 8M12 4l-8 8'].map((d, i) => (
      <button key={i} aria-label={['Minimize drawing', 'Restore drawing', 'Close drawing'][i]} className="-ml-[3px]">
        <svg viewBox="0 0 16 16" className="w-[9px] h-[9px]" fill="none" stroke="#444" strokeWidth="2"><path d={d} /></svg>
      </button>
    ))}
  </nav>
);

const App: React.FC = () => {
  return (
    <main className="min-h-screen bg-white font-['Liberation_Sans',sans-serif] text-[7px] leading-[10px] text-black">
      {/* Model space window */}
      <section className="mx-[14px] bg-[#ece9d8] overflow-hidden">
        <div className="flex h-[257px] overflow-hidden">
          <div className="flex w-[34px] flex-shrink-0 items-start border-r-2 border-[#777]">
            <ToolColumn items={[...drawTools, '-']} className="h-[186px]" />
            <ToolColumn items={[...editTools, '-']} className="h-[186px]" />
          </div>
          <div className="flex-1 min-w-0 flex flex-col">
            <TankDrawing />
            <SheetTabs tabs={['Model', 'ANSI A Title Block (portrait)']} active={0} dark scroll="w-[184px]" />
          </div>
          <div className="h-[246px] flex"><VScroll thumb="pt-0" /></div>
          <ToolColumn items={['vLeft', 'vRight', 'vFront', 'vBack', ...isoTools, '-']} className="ml-[2px] h-[138px] -mt-[11px]" />
          <ToolColumn items={['gouraud', 'flatEdge', 'gouraudEdge', '|', '#', ...ucsTools, 'apply']} className="ml-px h-[266px]" />
        </div>
        <CommandLine lines={['Regenerating model.', 'AutoCAD menu utilities loaded.']} />
        <div className="h-[18px] flex border-t border-[#c4c1b0]">
          <ToolRow items={solidTools} className="w-[508px]" />
        </div>
        <StatusBar coords="12.9998, 17.3605, 0.0000" space="MODEL" coordClass="w-[146px]" />
        <TaskBar time="11:41 PM" tasks="w-[386px]" tray="w-[79px]" height="h-[19px]" />
      </section>

      <p className="h-[37px] pt-px text-center font-['Noto_Sans',sans-serif] text-[14px] leading-[20px] text-[#222]">Gambar tangki horizontal</p>

      {/* Paper space window */}
      <section className="mx-[3px] bg-[#ece9d8] overflow-hidden">
        <TitleBar />
        <MenuBar />
        <div className="h-[18px] flex border-t border-white">
          <ToolRow items={standardTools} className="w-[553px]" />
        </div>
        <div className="h-[17px] flex items-center border-b border-[#999]">
          <div className="w-[3px] h-[13px] ml-[2px] mr-[2px] border-l border-r border-[#c4c1b0]" />
          <button aria-label="layers" className="w-[15px] flex justify-center"><Icon name="layers" /></button>
          <button aria-label="layers2" className="w-[15px] flex justify-center"><Icon name="layers2" /></button>
          <div className="relative ml-[2px]">
            <Combo label="Layer" value="0" className="w-[111px]" pad="pl-[51px]" />
            <div className="absolute left-[2px] top-[2px] flex items-center pointer-events-none">
              {['bulb', 'sun', 'sunVp', 'lock'].map((name) => <Icon key={name} name={name} className="w-[10px] h-[9px]" />)}
              <div className="w-[7px] h-[7px] bg-black" />
            </div>
          </div>
          <button aria-label="layerObj" className="w-[15px] flex justify-center"><Icon name="layerObj" /></button>
          <div className="w-[3px] h-[13px] mr-[3px] border-l border-r border-[#c4c1b0]" />
          <div className="relative">
            <Combo label="Color" value="ByLayer" className="w-[58px]" pad="pl-[12px]" />
            <div className="absolute left-[3px] top-[3px] w-[7px] h-[7px] bg-black pointer-events-none" />
          </div>
          <Combo label="Linetype" value="ByLayer" className="ml-[5px] w-[99px]" pad="pl-[42px]" line="w-[38px]" />
          <Combo label="Lineweight" value="ByLayer" className="ml-[5px] w-[77px]" pad="pl-[27px]" line="w-[22px]" />
          <Combo label="Plot style" value="ByColor" className="ml-[6px] w-[74px]" pad="pl-[5px]" disabled />
        </div>
        <div className="flex h-[331px] overflow-hidden">
          <div className="flex w-[34px] flex-shrink-0 items-start border-r border-[#777]">
            <ToolColumn items={['#', 'line', 'xline', 'mline', 'pline', ...drawTools, '-']} className="h-[257px]" />
            <ToolColumn items={['#', 'erase', 'copy', 'mirror', 'offset', ...editTools, '-']} className="h-[257px]" />
          </div>
          <div className="flex-1 min-w-0 flex flex-col border-t border-[#555]">
            <PlantDrawing />
            <SheetTabs tabs={['Model', 'Layout1', 'Layout2']} active={1} scroll="w-[189px]" />
          </div>
          <div className="h-[320px] flex"><VScroll thumb="pt-[146px]" /></div>
          <ToolColumn items={['#', 'named', '|', 'vTop', 'vBottom', 'vLeft', 'vRight', 'vFront', 'vBack', ...isoTools, '-']} className="ml-[2px] h-[197px]" />
          <ToolColumn items={['#', 'wire2d', 'wire3d', 'hidden', 'flat', 'gouraud', 'flatEdge', 'gouraudEdge', '|', '#', ...ucsTools, 'apply']} className="ml-px h-[340px]" />
        </div>
        <CommandLine lines={['Command:  <Switching to: Layout1>', 'Restoring cached viewports - Regenerating layout.']} roomy />
        <div className="h-[19px] flex border-t border-[#c4c1b0]">
          <ToolRow items={solidTools} className="w-[526px]" />
        </div>
        <StatusBar coords="5.7124, 0.7942 , 0.0000" space="PAPER" coordClass="w-[151px]" />
        <TaskBar time="11:42 PM" tasks="w-[402px]" tray="w-[86px]" height="h-[17px]" />
      </section>
    </main>
  );
};

export default App;
